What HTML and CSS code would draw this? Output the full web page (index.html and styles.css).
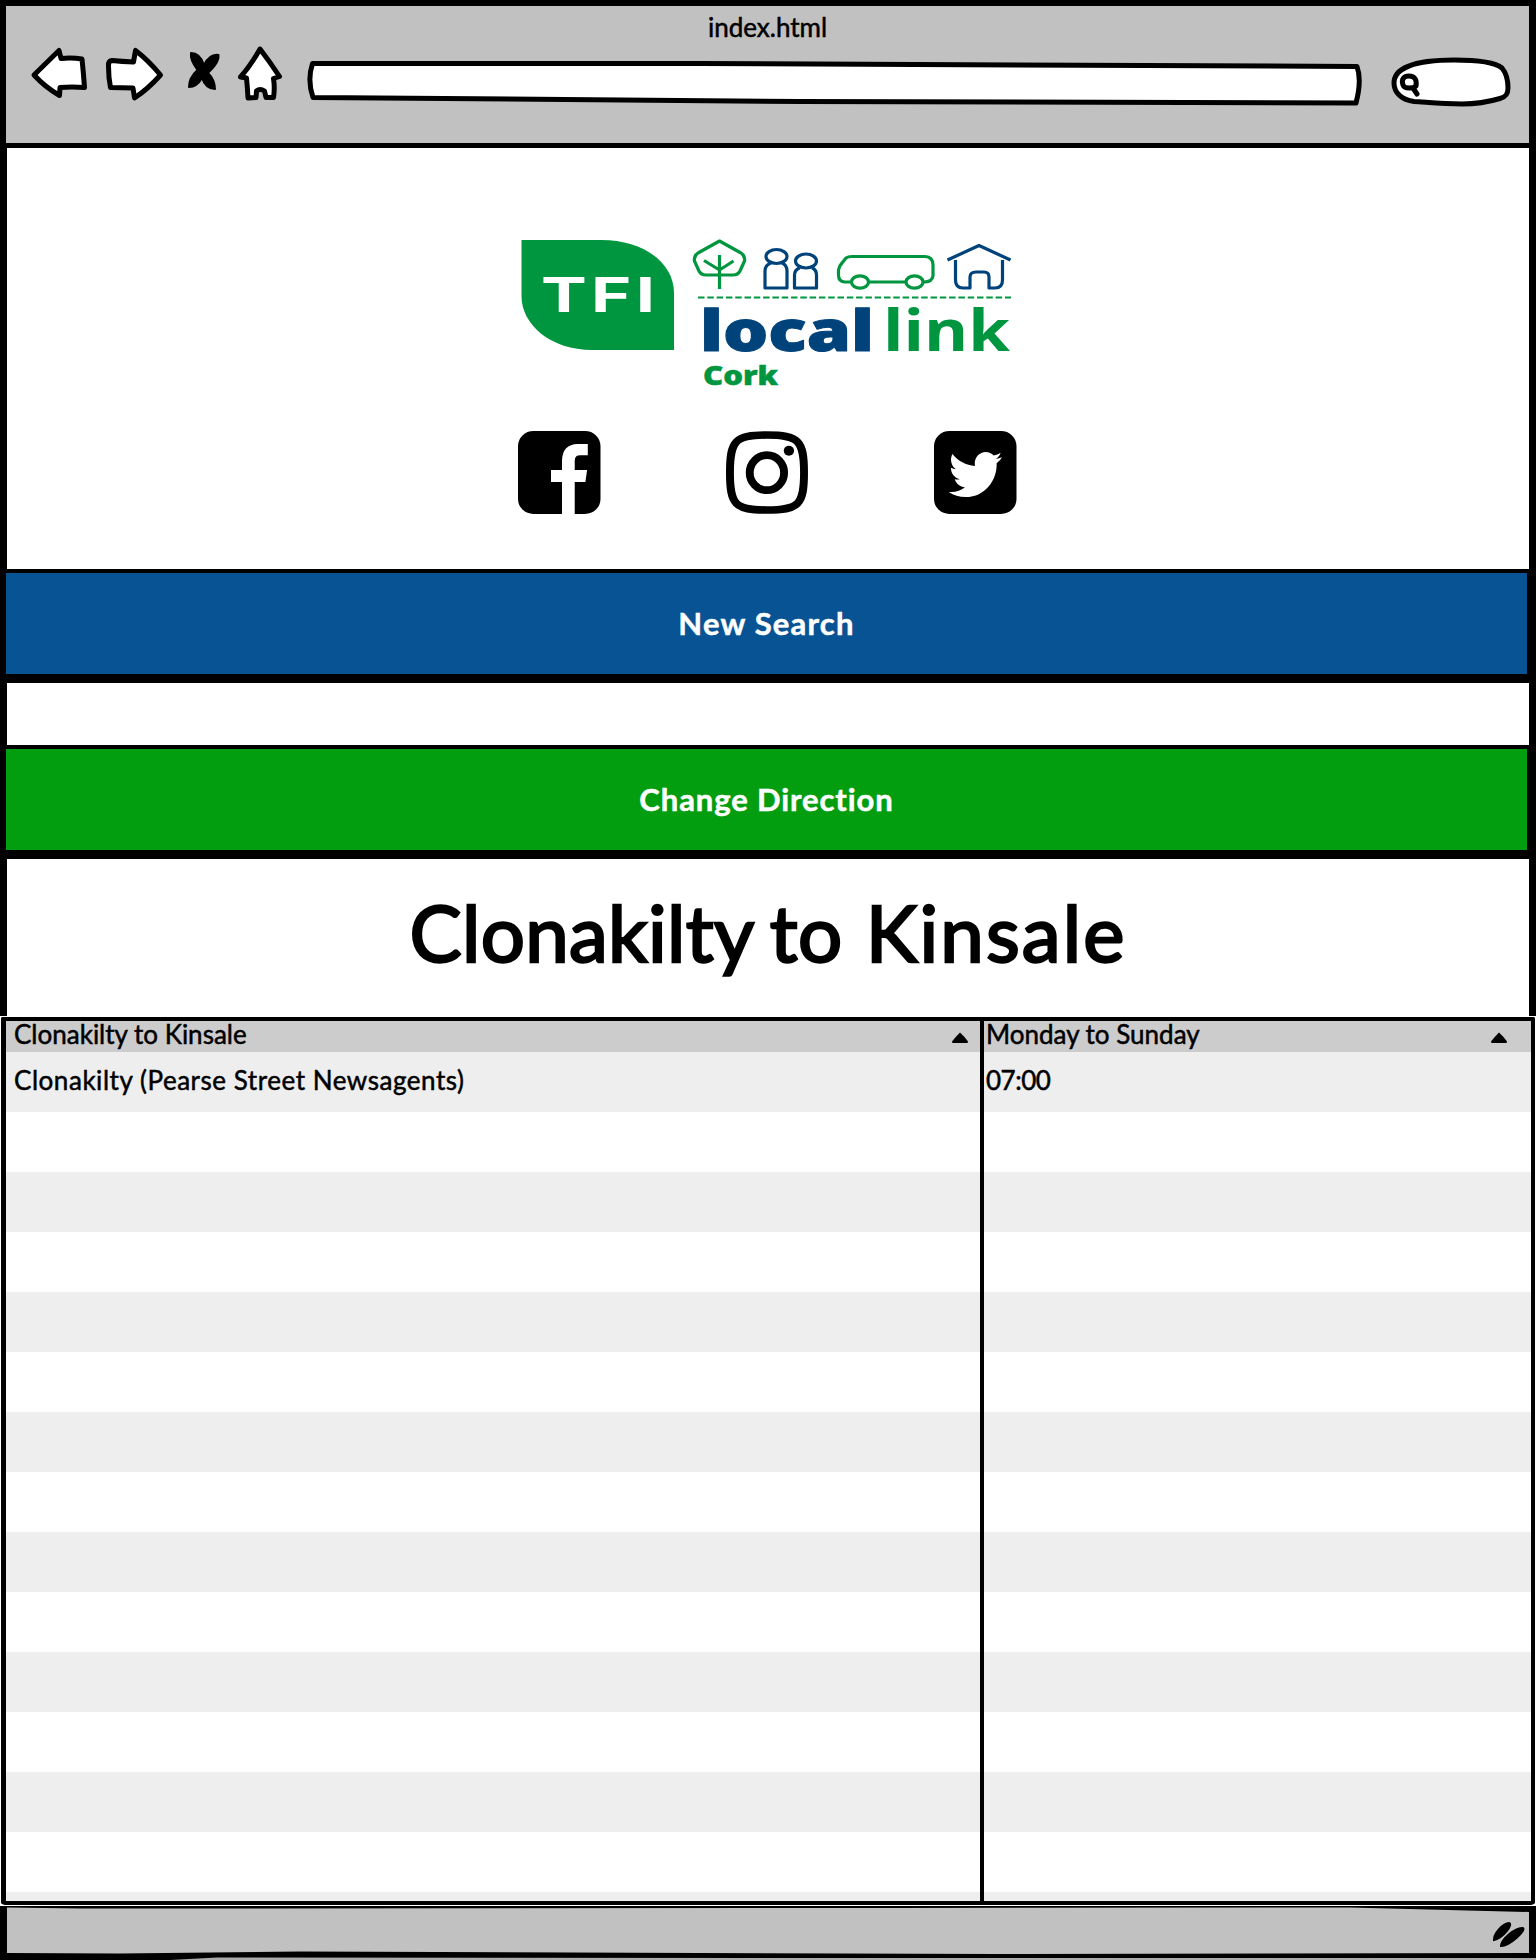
FILE: index.html
```html
<!DOCTYPE html>
<html lang="en">
<head>
<meta charset="utf-8">
<title>index.html</title>
<link rel="stylesheet" href="styles.css">
</head>
<body>
<div class="browser">
  <header class="chrome">
    <div class="chrome-title"><span class="t-title">index.html</span></div>
    <div class="toolbar">
      <svg class="tool back" viewBox="28 44 62 64"><path d="M34 75 L59 50.500 L61 58.500 Q72 57.500 82 59 Q83.500 73 84.500 87.500 Q72 86.500 60 87.500 L59.500 95.500 Q45 87 34 75Z"/></svg>
      <svg class="tool forward" viewBox="102 44 64 64"><path d="M160.500 75 Q148 60 135.500 50.500 L133.500 62 Q122 61.500 112 60.500 Q108 61 108.500 66 Q108.500 78 110.500 87.500 L133 88 L134.500 98 Q148 89 160.500 75Z"/></svg>
      <svg class="tool stop" viewBox="184 44 40 64"><path class="solid" d="M191 53 C198 53 202 59 204 65 C208 57 212 54 218.500 55 C219 62 213 68 208 73 C212 77 215 83 215 89 C208 89 204 84 202 78 C198 85 194 87 189 87 C189 80 193 74 197.500 70 C193 64 190 59 191 53Z"/></svg>
      <svg class="tool home" viewBox="234 44 52 64"><path d="M260 49 Q270 62 279.500 76.500 L273.500 78.500 Q275 88 273.500 97.500 L266 97.500 L264.500 91 Q260 88 256.500 91 L256 97.500 L248 98 Q247.500 88 246.500 78 L240.500 77 Q251 65 260 49Z"/></svg>
      <svg class="tool address" viewBox="304 44 1060 64"><path d="M312.500 63.500 L700 63.500 L1357 66.500 Q1362 80 1356 103 L800 101.500 L313 97.500 Q307 80 312.500 63.500Z"/></svg>
      <svg class="tool search" viewBox="1388 44 126 64"><path d="M1394 83 C1394 68 1415 60 1454 60 C1480 60 1496 63 1502 68 C1507 74 1508 82 1508 88 C1508 94 1506 97 1500 98.500 C1485 103 1475 104 1462 104 C1440 104 1425 102 1414 101.500 C1402 100 1394 93 1394 83Z"/><path d="M1403 85 C1401 79 1404 76 1409 76 C1415 76 1417 80 1416 86 Q1414 88 1409 88 Q1404 88 1403 85Z M1413 88 L1417 94"/></svg>
    </div>
  </header>

  <main class="page">
    <section class="brand">
      <svg class="logo" viewBox="515 232 504 160">
        <path fill="#009640" d="M521.500 240 H601 C644 240 674 263 674 293 V350 H592 C551 350 521.500 325 521.500 296Z"/>
        <text class="tfi" transform="translate(541 312) scale(1.430 1)">TFI</text>
        <g class="green-line">
          <path d="M719.500 241 L741 253 Q745.500 256 744.500 261 L740 271 Q738 275 733 275 H706 Q701 275 699 271 L694.500 261 Q693.500 256 698 253Z"/>
          <path d="M719.500 255 V289 M704 260.500 L719.500 270 L733.500 261"/>
          <path d="M852 282 H845 Q838.500 282 838.500 275 V270 Q839 266 842 263 L846 258 Q848 256.500 852 256.500 H925 Q933 257 933 265 V276 Q932 282 924 282 M868 282 H905"/>
          <ellipse cx="860" cy="282" rx="8.500" ry="6.200"/><ellipse cx="914.500" cy="282" rx="8.500" ry="6.200"/>
          <path stroke-width="2" stroke-dasharray="6.500 2.800" stroke-linecap="butt" d="M698 297.500 H1011"/>
        </g>
        <g class="blue-line">
          <ellipse cx="776.500" cy="256.500" rx="10.500" ry="7"/><ellipse cx="806" cy="261" rx="10.500" ry="7"/>
          <path d="M771 263 Q765 265 765 271 V288 H787 V271 Q787 265 782 263 M800 267.500 Q794.500 270 794.500 275 V288 H816.500 V275 Q816.500 270 812 267.500"/>
          <path d="M947.500 260 L979 245.500 L1010.500 260 M955.500 260 V280 Q955.500 288 963 288 H970 V277 Q970 272 976 272 H984 Q989 272 989 277 V288 H995 Q1002.500 288 1002.500 280 V260"/>
        </g>
        <text class="local" x="700" y="350.500" textLength="174" lengthAdjust="spacingAndGlyphs">local</text>
        <text class="link" x="883" y="350.500" textLength="127" lengthAdjust="spacingAndGlyphs">link</text>
        <text class="cork" x="703" y="384.500" textLength="75" lengthAdjust="spacingAndGlyphs">Cork</text>
      </svg>
      <nav class="social">
        <svg viewBox="52 63 240 249" preserveAspectRatio="none"><rect x="52" y="63" width="240" height="249" rx="45"/><path fill="#fff" d="M180 313 V216 H148 V180 H180 V152 Q181 103 226 102 H255 V136 H233 Q217 136 217 152 V180 H253 L248 216 H217 V313Z"/></svg>
        <svg viewBox="656 63 240 249" preserveAspectRatio="none"><path fill="none" stroke="#000" stroke-width="23" d="M667.500 188 C667.500 92 682 75 775 75 C868 75 883 92 883 188 C883 284 868 300 775 300 C682 300 667.500 284 667.500 188Z"/><ellipse cx="775" cy="188" rx="50" ry="52.500" fill="none" stroke="#000" stroke-width="23"/><circle cx="839" cy="122" r="15"/></svg>
        <svg viewBox="1260 63 240 249" preserveAspectRatio="none"><rect x="1260" y="63" width="240" height="249" rx="45"/><path fill="#fff" transform="translate(1303 110.400) scale(.303 .325)" d="M459.370 151.716c.325 4.548.325 9.097.325 13.645 0 138.720-105.583 298.558-298.558 298.558-59.452 0-114.680-17.219-161.137-47.106 8.447.974 16.568 1.299 25.340 1.299 49.055 0 94.213-16.568 130.274-44.832-46.132-.975-84.792-31.188-98.112-72.772 6.498.974 12.995 1.624 19.818 1.624 9.421 0 18.843-1.300 27.614-3.573-48.081-9.747-84.143-51.980-84.143-102.985v-1.299c13.969 7.797 30.214 12.670 47.431 13.319-28.264-18.843-46.781-51.005-46.781-87.391 0-19.492 5.197-37.360 14.294-52.954 51.655 63.675 129.300 105.258 216.365 109.807-1.624-7.797-2.599-15.918-2.599-24.040 0-57.828 46.782-104.934 104.934-104.934 30.213 0 57.502 12.670 76.670 33.137 23.715-4.548 46.456-13.320 66.599-25.340-7.798 24.366-24.366 44.833-46.132 57.827 21.117-2.273 41.584-8.122 60.426-16.243-14.292 20.791-32.161 39.308-52.628 54.253z"/></svg>
      </nav>
    </section>
    <button class="bar bar-blue"><span class="t-search">New Search</span></button>
    <button class="bar bar-green"><span class="t-change">Change Direction</span></button>
    <h1 class="route"><span class="t-route">Clonakilty to <span class="wide">Kinsale</span></span></h1>
  </main>

  <section class="timetable">
    <div class="col col-stop">
      <div class="head"><span class="t-head1">Clonakilty to Kinsale</span><svg class="sort" viewBox="0 0 18 12"><path d="M1 9.500 Q4 5.500 9 .5 Q14 5 17 9.500 Q17 11 16 11 H2 Q1 11 1 9.500Z"/></svg></div>
      <div class="cell"><span class="t-stop">Clonakilty (Pearse Street Newsagents)</span></div>
    </div>
    <div class="col col-time">
      <div class="head"><span class="t-head2">Monday to Sunday</span><svg class="sort" viewBox="0 0 18 12"><path d="M1 9.500 Q4 5.500 9 .5 Q14 5 17 9.500 Q17 11 16 11 H2 Q1 11 1 9.500Z"/></svg></div>
      <div class="cell"><span class="t-time">07:00</span></div>
    </div>
  </section>

  <footer class="status">
    <svg viewBox="0 1905 1536 55">
      <path d="M0 1906 H1536 V1958 L900 1958 L217 1957.500 L170 1960 H0Z"/>
      <path fill="#c1c1c1" d="M7 1907.500 L80 1908.500 L900 1908 L1350 1907.500 L1529 1912 V1953 L1000 1954 L300 1951.500 L120 1953.500 L7 1953Z"/>
      <path stroke="#000" stroke-width="2" d="M1494 1940 C1493.500 1934 1503 1923 1509 1923 C1513.500 1924 1504 1937 1494 1940Z M1501 1946 C1501 1940 1515 1927 1523 1928 C1526.500 1930 1510 1946 1501 1946Z"/>
    </svg>
  </footer>
</div>
</body>
</html>
```
FILE: styles.css
```css
* { box-sizing: border-box; }

body {
  margin: 0;
  background: #fff;
  color: #000;
  font-family: Lato, "Open Sans", sans-serif;
  font-size: 26px;
}

svg { display: block; }

span {
  white-space: nowrap;
  -webkit-text-stroke: 0.5px currentColor;
}

.browser {
  display: flex;
  flex-direction: column;
  width: 1536px;
  height: 1960px;
  overflow: hidden;
}

/* Window chrome */
.chrome {
  height: 148px;
  background: #c1c1c1;
  border: solid #000;
  border-width: 6px 7px 5px 6px;
}

.chrome-title {
  height: 38px;
  padding-top: 6px;
  line-height: 30px;
  text-align: center;
}

.toolbar {
  display: flex;
  height: 64px;
  padding-left: 22px;
}

.tool {
  flex: none;
  height: 64px;
  fill: #fff;
  stroke: #000;
  stroke-width: 5px;
  stroke-linejoin: round;
  stroke-linecap: round;
}
.back { width: 62px; }
.forward { width: 64px; margin-left: 12px; }
.stop { width: 40px; margin-left: 18px; }
.home { width: 52px; margin-left: 10px; }
.address { width: 1060px; margin-left: 18px; }
.search { width: 126px; margin-left: 24px; }
.solid { fill: #000; stroke-width: 2px; }

/* Page content */
.page {
  display: flex;
  flex-direction: column;
  height: 868px;
  border: solid #000;
  border-width: 0 7px;
}

.brand { height: 421px; padding-top: 84px; }
.logo { width: 504px; height: 160px; margin-left: 508px; }
.tfi { font: 700 48px Inter, sans-serif; letter-spacing: 3px; fill: #fff; }
.local { font: 800 57px "Open Sans", sans-serif; fill: #00437b; stroke: #00437b; stroke-width: 1px; stroke-linejoin: round; }
.link { font: 700 57px "Open Sans", sans-serif; fill: #009640; }
.cork { font: 800 26px "Open Sans", sans-serif; fill: #009640; stroke: #009640; stroke-width: .5px; }
.green-line, .blue-line { fill: none; stroke-width: 3.2px; stroke-linejoin: round; }
.green-line { stroke: #009640; }
.blue-line { stroke: #00437b; }

.social {
  display: flex;
  gap: 125.500px;
  margin: 39px 0 0 511px;
}
.social svg { width: 82.500px; height: 83px; }

.bar {
  height: 114px;
  margin: 0 -1px;
  padding: 0 0 2px;
  border: solid #000;
  border-width: 4px 3px 9px 0;
  color: #fff;
  font: 700 31px/98px Lato, sans-serif;
  text-align: center;
}
.bar-blue { background: #085394; }
.bar-green { margin-top: 62px; background: #039e10; }

.route {
  margin: 0;
  height: 157px;
  font-size: 78px;
  font-weight: 400;
  line-height: 147px;
  text-align: center;
}

/* Timetable */
.timetable {
  display: flex;
  height: 889px;
  background: linear-gradient(#000, #000) 1px 1px / 1534px 888px no-repeat;
  border-radius: 5px;
  padding: 5px 5px 4px 6px;
}

.col {
  background: repeating-linear-gradient(#eee 0 60px, #fff 60px 120px) 0 31px;
}
.col-stop { width: 974px; }
.col-time { width: 547px; margin-left: 4px; }

.head {
  display: flex;
  align-items: center;
  justify-content: space-between;
  height: 31px;
  background: #ccc;
  line-height: 28px;
}
.col-stop .head { padding: 0 11px 0 8px; }
.col-time .head { padding: 0 23px 0 2px; }
.head span { margin-top: -6px; }
.sort { width: 18px; height: 12px; margin-top: 2px; }

.cell { height: 60px; line-height: 56px; }
.col-stop .cell { padding-left: 8px; }
.col-time .cell { padding-left: 2px; }

.status { height: 55px; background: linear-gradient(#fff 50%, #aaa 50%); }
.status svg { width: 1536px; height: 55px; }

/* Text tuning */
.t-search { letter-spacing: 1.200px; }
.t-change { letter-spacing: .9px; }
.t-route { letter-spacing: .3px; word-spacing: -3px; }
.t-route, .wide { -webkit-text-stroke: 2.400px #000; }
.wide { letter-spacing: 2.100px; margin-left: 6px; }
.t-stop { letter-spacing: .54px; }
.t-time { letter-spacing: -.5px; }
```
